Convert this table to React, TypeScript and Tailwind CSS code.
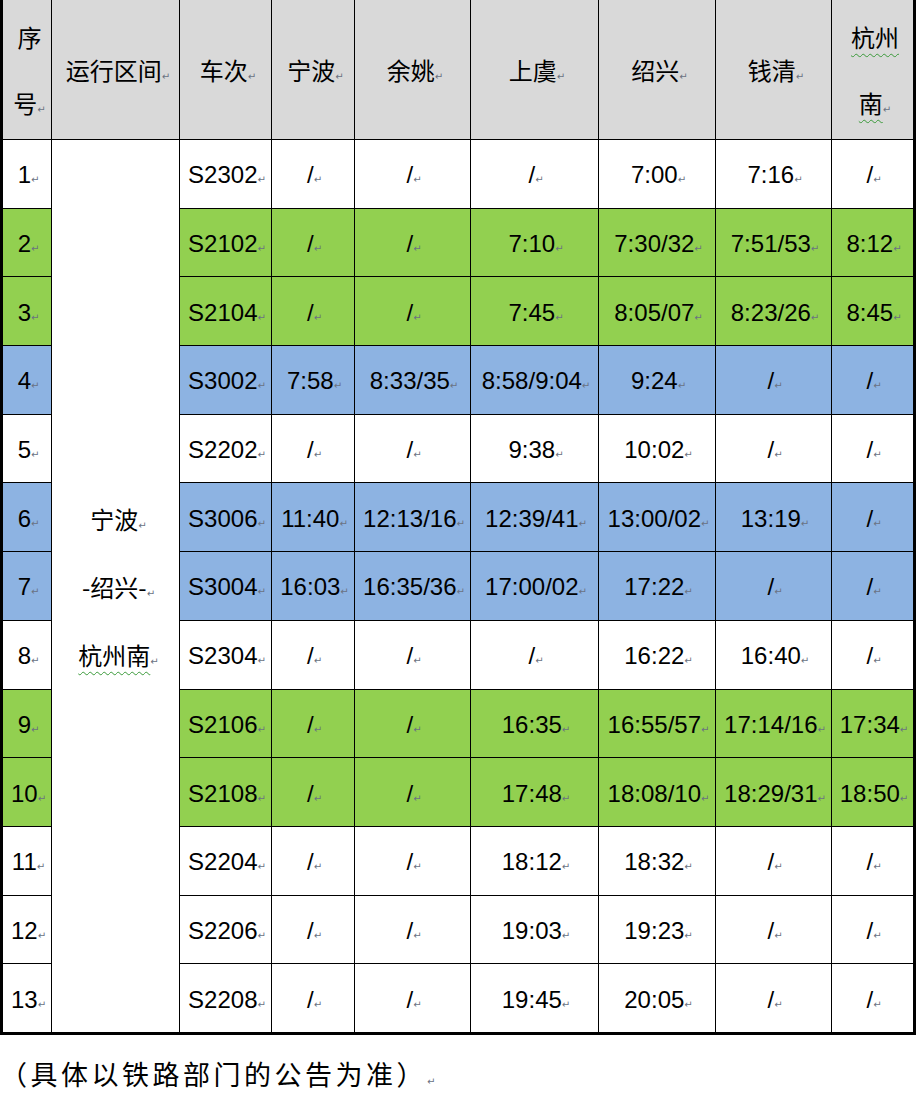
type Tone = "white" | "green" | "blue";

interface TrainRow {
  no: number;
  train: string;
  times: string[];
  tone: Tone;
}

const rows: TrainRow[] = [
  { no: 1, train: "S2302", times: ["/", "/", "/", "7:00", "7:16", "/"], tone: "white" },
  { no: 2, train: "S2102", times: ["/", "/", "7:10", "7:30/32", "7:51/53", "8:12"], tone: "green" },
  { no: 3, train: "S2104", times: ["/", "/", "7:45", "8:05/07", "8:23/26", "8:45"], tone: "green" },
  { no: 4, train: "S3002", times: ["7:58", "8:33/35", "8:58/9:04", "9:24", "/", "/"], tone: "blue" },
  { no: 5, train: "S2202", times: ["/", "/", "9:38", "10:02", "/", "/"], tone: "white" },
  { no: 6, train: "S3006", times: ["11:40", "12:13/16", "12:39/41", "13:00/02", "13:19", "/"], tone: "blue" },
  { no: 7, train: "S3004", times: ["16:03", "16:35/36", "17:00/02", "17:22", "/", "/"], tone: "blue" },
  { no: 8, train: "S2304", times: ["/", "/", "/", "16:22", "16:40", "/"], tone: "white" },
  { no: 9, train: "S2106", times: ["/", "/", "16:35", "16:55/57", "17:14/16", "17:34"], tone: "green" },
  { no: 10, train: "S2108", times: ["/", "/", "17:48", "18:08/10", "18:29/31", "18:50"], tone: "green" },
  { no: 11, train: "S2204", times: ["/", "/", "18:12", "18:32", "/", "/"], tone: "white" },
  { no: 12, train: "S2206", times: ["/", "/", "19:03", "19:23", "/", "/"], tone: "white" },
  { no: 13, train: "S2208", times: ["/", "/", "19:45", "20:05", "/", "/"], tone: "white" },
];

const toneBg: Record<Tone, string> = {
  white: "bg-white",
  green: "bg-[#92d050]",
  blue: "bg-[#8db3e2]",
};

const stations = ["宁波", "余姚", "上虞", "绍兴", "钱清"];

// Word's paragraph mark
function Mark() {
  return <span className="text-[10px] leading-none text-gray-500 font-['DejaVu_Sans',sans-serif]">↵</span>;
}

function Cell({ text, bg }: { text: string; bg: string }) {
  return (
    <div className={`${bg} flex items-center justify-center pt-[3px] pl-[3px]`}>
      <span>
        {text}
        <Mark />
      </span>
    </div>
  );
}

function HeadCell({ children }: { children: React.ReactNode }) {
  return (
    <div className="bg-[#d9d9d9] flex flex-col items-center justify-center pl-[5px] font-['Noto_Sans_CJK_SC',sans-serif] text-[24px]">
      {children}
    </div>
  );
}

const wavy = "underline decoration-wavy decoration-[#3a9a3a] decoration-1 underline-offset-[6px]";

export default function App() {
  return (
    <div className="w-[917px] bg-white font-['Liberation_Sans','Noto_Sans_CJK_SC',sans-serif] text-black">
      <div className="w-[916px] bg-black px-[3px] pb-[3px] grid gap-px grid-cols-[48px_127px_91px_82px_115px_127px_116px_115px_81px] grid-rows-[139px_repeat(13,67.7px)] text-[24px]">
        <HeadCell>
          <span className="leading-[66px]">序</span>
          <span className="leading-[66px]">
            号<Mark />
          </span>
        </HeadCell>
        <HeadCell>
          <span>
            运行区间<Mark />
          </span>
        </HeadCell>
        <HeadCell>
          <span>
            车次<Mark />
          </span>
        </HeadCell>
        {stations.map((s) => (
          <HeadCell key={s}>
            <span>
              {s}
              <Mark />
            </span>
          </HeadCell>
        ))}
        <HeadCell>
          <span className="leading-[66px]">
            <span className={wavy}>杭州</span>
          </span>
          <span className="leading-[66px]">
            <span className={wavy}>南</span>
            <Mark />
          </span>
        </HeadCell>

        {rows.map((r, i) => (
          <div key={r.no} className="contents">
            <Cell text={String(r.no)} bg={toneBg[r.tone]} />
            {i === 0 && (
              <div className="row-span-13 bg-white flex flex-col items-center justify-center pt-[2px] pl-[6px] font-['Noto_Sans_CJK_SC',sans-serif]">
                <span className="leading-[68px]">
                  宁波<Mark />
                </span>
                <span className="leading-[68px]">
                  -绍兴-<Mark />
                </span>
                <span className="leading-[68px]">
                  <span className={wavy}>杭州南</span>
                  <Mark />
                </span>
              </div>
            )}
            <Cell text={r.train} bg={toneBg[r.tone]} />
            {r.times.map((t, j) => (
              <Cell key={j} text={t} bg={toneBg[r.tone]} />
            ))}
          </div>
        ))}
      </div>

      <p className="mt-[19px] text-[27px] leading-[40px] tracking-[3.5px] font-['Noto_Sans_CJK_SC',sans-serif]">
        （具体以铁路部门的公告为准）<Mark />
      </p>
    </div>
  );
}
